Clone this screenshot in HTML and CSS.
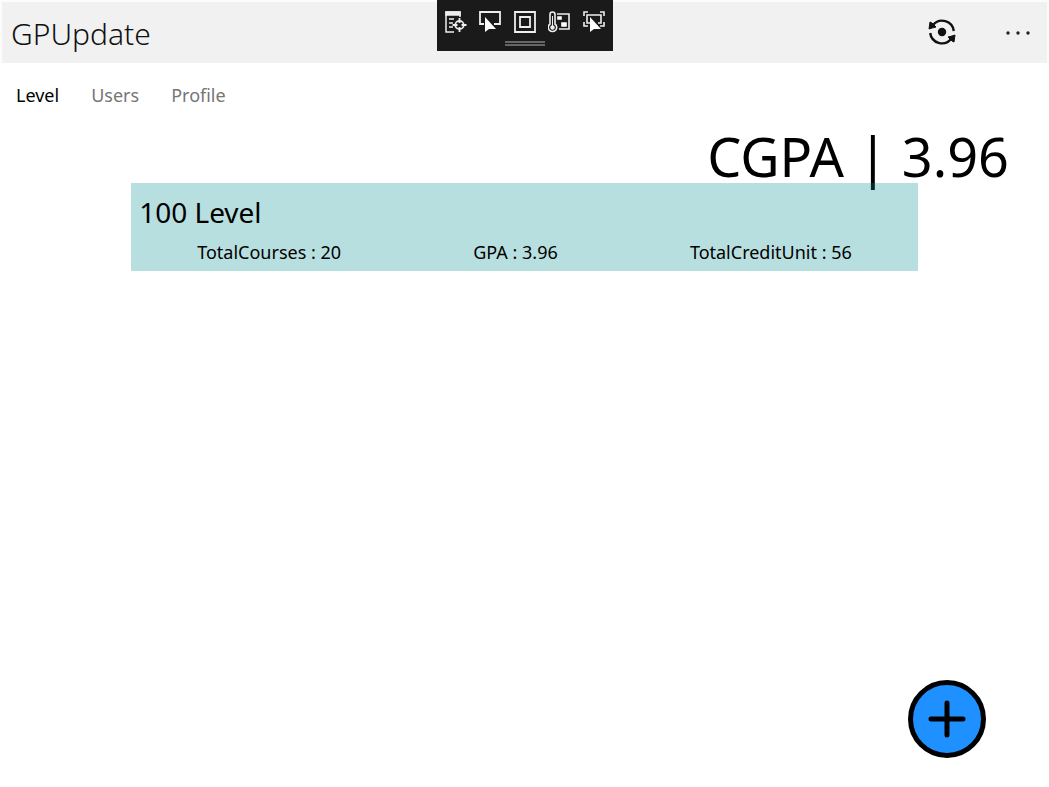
FILE: index.html
```
<!DOCTYPE html>
<html lang="en">
<head>
  <meta charset="UTF-8">
  <title>GPUpdate</title>
  <link rel="stylesheet" href="styles.css">
</head>
<body>
  <header class="top-bar">
    <h1>GPUpdate</h1>
    <div class="commands">
      <button class="command" aria-label="Sync">
        <svg width="28" height="28" viewBox="0 0 28 28" fill="none" stroke="#111" stroke-width="2.4">
          <path d="M5 7A11.800 11.800 0 0 1 25.800 13"/>
          <path d="M23 21A11.800 11.800 0 0 1 2.200 15"/>
          <path d="M2 4l2 1 4 4-4 1-3 1z" fill="#111" stroke-width="1"/>
          <path d="M26 24l-2-1-4-4 4-1 3-1z" fill="#111" stroke-width="1"/>
          <circle cx="14" cy="14" r="4.200" fill="#111" stroke="none"/>
        </svg>
      </button>
      <button class="command" aria-label="More">
        <svg width="26" height="28" viewBox="0 0 26 28" fill="#222">
          <circle cx="3" cy="15" r="1.700"/>
          <circle cx="13" cy="15" r="1.700"/>
          <circle cx="23" cy="15" r="1.700"/>
        </svg>
      </button>
    </div>
  </header>

  <!-- debug tools, float over the top bar -->
  <div class="debug-bar">
    <div class="debug-tools">
      <button aria-label="Live visual tree">
        <svg width="22" height="22" viewBox="0 0 22 22" fill="none" stroke="#eee" stroke-width="1.500">
          <path d="M15 6V1H1v20h8"/>
          <path d="M1 1h14v3H1z" fill="#eee"/>
          <path d="M4 8h5M4 12h4M4 16h4"/>
          <circle cx="14.500" cy="14" r="4.200" stroke-width="1.800"/>
          <path d="M14.500 7v5M14.500 16v5M7.500 14h5M16.500 14h5" stroke-width="1.800"/>
        </svg>
      </button>
      <button aria-label="Select element">
        <svg width="22" height="22" viewBox="0 0 22 22" fill="none" stroke="#eee" stroke-width="1.800">
          <path d="M5 13H1V1h20v12h-6"/>
          <path d="M6 6v15l4-3h7z" fill="#fff" stroke="none"/>
        </svg>
      </button>
      <button aria-label="Layout adorners">
        <svg width="22" height="22" viewBox="0 0 22 22" fill="none" stroke="#eee" stroke-width="1.800">
          <path d="M1 1h20v20H1zM6 6h10v10H6z"/>
        </svg>
      </button>
      <button aria-label="Hot reload">
        <svg width="22" height="22" viewBox="0 0 22 22" fill="none" stroke="#eee" stroke-width="1.600">
          <path d="M2 13V3.500a2.500 2.500 0 0 1 5 0V13a4.200 4.200 0 1 1-5 0z"/>
          <path d="M4.500 5v10" stroke-width="1"/>
          <circle cx="4.500" cy="16.500" r="2.200" fill="#eee" stroke="none"/>
          <path d="M9 3h12v15H11"/>
          <path d="M10 6h3v2h-3zM14 12h4v3h-4z" fill="#fff" stroke="#fff"/>
        </svg>
      </button>
      <button aria-label="Track focused element">
        <svg width="22" height="22" viewBox="0 0 22 22" fill="none" stroke="#eee" stroke-width="1.600">
          <path d="M1 5V1h4M17 1h4v4M1 11v4h4M17 15h4v-4"/>
          <path d="M7 12H4V4h14v8h-3"/>
          <path d="M7 6v15l4-3h7z" fill="#fff" stroke="none"/>
        </svg>
      </button>
    </div>
    <div class="grip"></div>
  </div>

  <nav class="tabs">
    <a href="#level" class="active">Level</a>
    <a href="#users">Users</a>
    <a href="#profile">Profile</a>
  </nav>

  <main id="level">
    <p class="cgpa">CGPA | 3.96</p>
    <section class="level-card">
      <h2>100 Level</h2>
      <div class="level-stats">
        <span>TotalCourses : 20</span>
        <span>GPA : 3.96</span>
        <span>TotalCreditUnit : 56</span>
      </div>
    </section>
  </main>

  <button class="add-button" aria-label="Add level">
    <svg width="38" height="38" viewBox="0 0 38 38" stroke="#000" stroke-width="5" stroke-linecap="round">
      <path d="M19 3v32M3 19h32"/>
    </svg>
  </button>
</body>
</html>
```
FILE: styles.css
```
* {
  box-sizing: border-box;
}

body {
  margin: 0;
  background: #fff;
  color: #000;
  font-family: "Segoe UI", "Noto Sans", sans-serif;
}

h1, h2, p {
  margin: 0;
  font-weight: 400;
}

button {
  padding: 0;
  border: none;
  background: none;
  cursor: pointer;
}

svg {
  display: block;
}

.top-bar {
  display: flex;
  justify-content: space-between;
  align-items: center;
  height: 63px;
  padding: 2px 16px 0 9px;
  background: #f1f1f1;
  border: 2px solid #fcfcfc;
  border-bottom: none;
}

.top-bar h1 {
  font-size: 30px;
  font-weight: 300;
  line-height: 40px;
  color: #111;
}

.commands {
  display: flex;
  gap: 49px;
  padding-bottom: 4px;
}

.debug-bar {
  position: absolute;
  top: 0;
  left: 50%;
  width: 176px;
  height: 51px;
  padding: 11px 8px 0;
  transform: translateX(-50%);
  background: #1a1a1a;
}

.debug-tools {
  display: flex;
  justify-content: space-between;
}

.grip {
  width: 40px;
  height: 5px;
  margin: 8px auto 0;
  border: solid #666;
  border-width: 2px 0;
}

.tabs {
  display: flex;
  gap: 32px;
  padding: 19px 16px 0;
  font-size: 18px;
  line-height: 26px;
}

.tabs a {
  color: #767676;
  text-decoration: none;
}

.tabs .active {
  color: #000;
}

.cgpa {
  margin-bottom: -6px;
  padding: 15px 40px 0 0;
  font-size: 54px;
  line-height: 66px;
  text-align: right;
}

/* see-through, the CGPA divider shows under its top edge */
.level-card {
  position: relative;
  width: 75%;
  margin: 0 auto;
  padding: 8px 0 2px;
  background: rgba(0, 139, 139, 0.28);
}

.level-card h2 {
  padding-left: 8px;
  font-size: 28px;
  line-height: 42px;
}

.level-stats {
  display: flex;
  justify-content: space-around;
  padding-top: 2px;
  font-size: 18px;
  line-height: 34px;
}

.add-button {
  position: fixed;
  right: 63px;
  bottom: 29px;
  display: flex;
  justify-content: center;
  align-items: center;
  width: 78px;
  height: 78px;
  border: 5px solid #000;
  border-radius: 50%;
  background: #1e90ff;
}
```
